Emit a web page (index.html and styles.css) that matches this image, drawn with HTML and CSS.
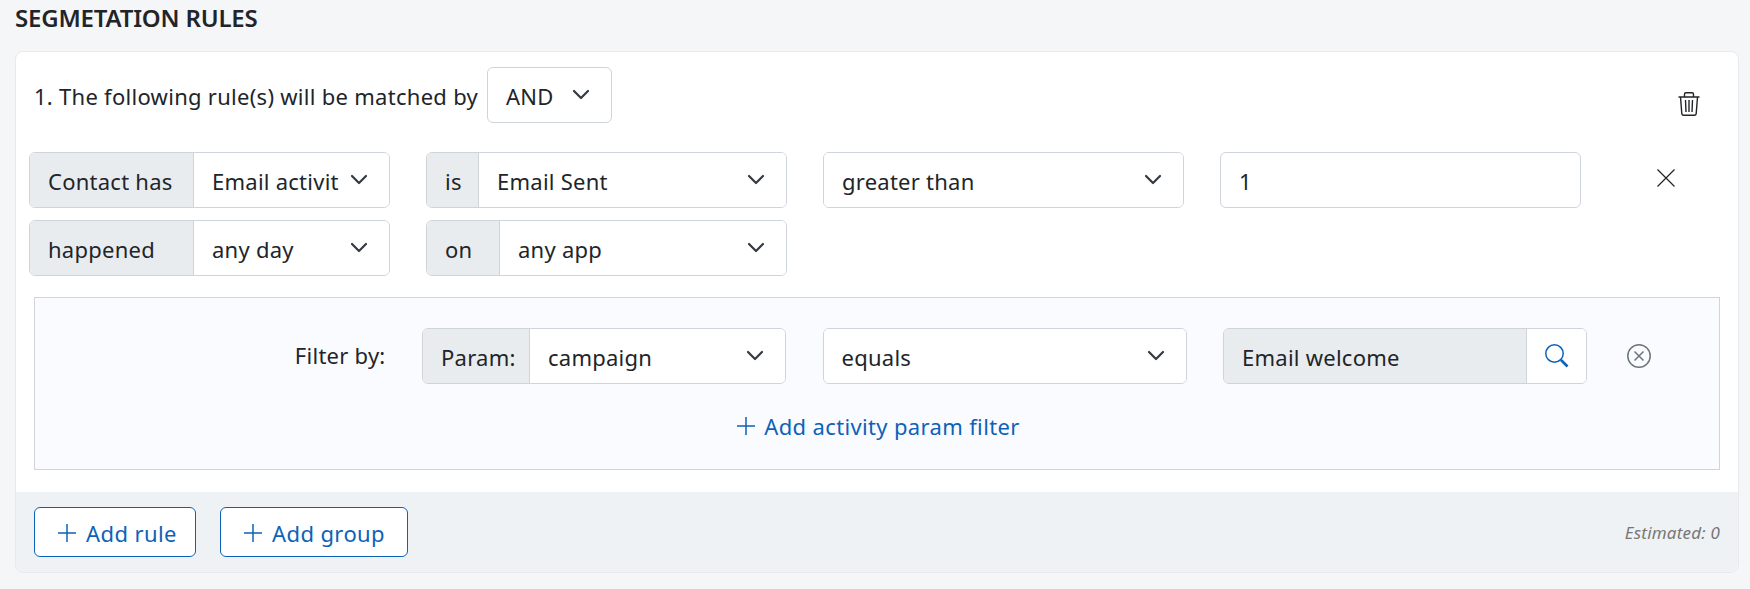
FILE: index.html
```html
<!DOCTYPE html>
<html lang="en">
<head>
    <meta charset="UTF-8">
    <meta name="viewport" content="width=device-width, initial-scale=1.0">
    <title>Segmentation rules</title>
    <link rel="stylesheet" href="styles.css">
</head>
<body>
    <h2 class="page-title">SEGMETATION RULES</h2>

    <div class="card">
        <div class="card-head">
            <div class="match-line">
                <span class="match-text">1. The following rule(s) will be matched by</span>
                <div class="select select-and">
                    <span class="select-text">AND</span>
                    <svg class="chevron" viewBox="0 0 16 16"><path d="M1 4l7 7 7-7"/></svg>
                </div>
            </div>
            <button class="icon-btn trash-btn" aria-label="Delete group">
                <svg viewBox="0 0 22 24" width="22" height="24" fill="none" stroke="#212529" stroke-width="1.4">
                    <path d="M0.5 5h21"/>
                    <path d="M6.5 5V2.2q0-1.4 1.4-1.4h6.2q1.4 0 1.4 1.4V5"/>
                    <path d="M2.5 5l1.3 16.6q.2 1.7 1.9 1.7h10.6q1.7 0 1.9-1.7L19.5 5"/>
                    <path d="M7.5 8l.5 12M11 8v12M14.5 8l-.5 12"/>
                </svg>
            </button>
        </div>

        <div class="rule-grid">
            <div class="group">
                <span class="group-label label-wide">Contact has</span>
                <div class="select">
                    <span class="select-text">Email activit</span>
                    <svg class="chevron" viewBox="0 0 16 16"><path d="M1 4l7 7 7-7"/></svg>
                </div>
            </div>
            <div class="group">
                <span class="group-label label-is">is</span>
                <div class="select">
                    <span class="select-text">Email Sent</span>
                    <svg class="chevron" viewBox="0 0 16 16"><path d="M1 4l7 7 7-7"/></svg>
                </div>
            </div>
            <div class="group">
                <div class="select">
                    <span class="select-text">greater than</span>
                    <svg class="chevron" viewBox="0 0 16 16"><path d="M1 4l7 7 7-7"/></svg>
                </div>
            </div>
            <div class="group">
                <div class="text-value">1</div>
            </div>
            <button class="icon-btn close-btn" aria-label="Remove rule">
                <svg viewBox="0 0 20 20" width="20" height="20" fill="none" stroke="#212529" stroke-width="1.2"><path d="M1.5 1.5l17 17M18.5 1.5l-17 17"/></svg>
            </button>

            <div class="group">
                <span class="group-label label-wide">happened</span>
                <div class="select">
                    <span class="select-text">any day</span>
                    <svg class="chevron" viewBox="0 0 16 16"><path d="M1 4l7 7 7-7"/></svg>
                </div>
            </div>
            <div class="group">
                <span class="group-label label-on">on</span>
                <div class="select">
                    <span class="select-text">any app</span>
                    <svg class="chevron" viewBox="0 0 16 16"><path d="M1 4l7 7 7-7"/></svg>
                </div>
            </div>
        </div>

        <div class="filter-box">
            <div class="filter-row">
                <label class="filter-label">Filter by:</label>
                <div class="group">
                    <span class="group-label label-param">Param:</span>
                    <div class="select">
                        <span class="select-text">campaign</span>
                        <svg class="chevron" viewBox="0 0 16 16"><path d="M1 4l7 7 7-7"/></svg>
                    </div>
                </div>
                <div class="group">
                    <div class="select">
                        <span class="select-text">equals</span>
                        <svg class="chevron" viewBox="0 0 16 16"><path d="M1 4l7 7 7-7"/></svg>
                    </div>
                </div>
                <div class="group">
                    <div class="readonly-value">Email welcome</div>
                    <button class="search-btn" aria-label="Search">
                        <svg viewBox="0 0 24 24" width="24" height="24" fill="none" stroke="#0d62b8" stroke-width="1.5">
                            <circle cx="9.5" cy="9.5" r="8.7"/>
                            <path d="M16 16l6.5 6.5" stroke-width="2.6"/>
                        </svg>
                    </button>
                </div>
                <button class="icon-btn remove-btn" aria-label="Remove filter">
                    <svg viewBox="0 0 24 24" width="24" height="24" fill="none" stroke="#6c757d" stroke-width="1.5">
                        <circle cx="12" cy="12" r="11.2"/>
                        <path d="M7.5 7.5l9 9M16.5 7.5l-9 9"/>
                    </svg>
                </button>
            </div>
            <div class="filter-add">
                <a class="link-add" href="#">
                    <svg class="plus" viewBox="0 0 18 18"><path d="M9 0v18M0 9h18"/></svg>
                    Add activity param filter
                </a>
            </div>
        </div>

        <div class="card-foot">
            <div class="foot-buttons">
                <button class="btn-add btn-rule">
                    <svg class="plus" viewBox="0 0 18 18"><path d="M9 0v18M0 9h18"/></svg>
                    Add rule
                </button>
                <button class="btn-add btn-group">
                    <svg class="plus" viewBox="0 0 18 18"><path d="M9 0v18M0 9h18"/></svg>
                    Add group
                </button>
            </div>
            <span class="estimated">Estimated: 0</span>
        </div>
    </div>
</body>
</html>
```

FILE: styles.css
```css
* {
    box-sizing: border-box;
}
body {
    margin: 0;
    padding: 0 11px 0 15px;
    background-color: #f5f6f8;
    color: #212529;
    font-family: "Noto Sans", "Open Sans", sans-serif;
    font-size: 22px;
    letter-spacing: 0.25px;
}
button {
    font: inherit;
    letter-spacing: inherit;
}
.page-title {
    margin: 0;
    height: 51px;
    padding-top: 2px;
    font-size: 24px;
    line-height: 32px;
    font-weight: 600;
    letter-spacing: -0.2px;
}
.card {
    background: white;
    border: 1px solid #e8e9ec;
    border-radius: 8px;
    overflow: hidden;
}
.card-head {
    display: flex;
    justify-content: space-between;
    padding: 15px 38px 0 18px;
    height: 100px;
}
.match-line {
    display: flex;
    align-items: center;
    gap: 9px;
    height: 56px;
}
.match-text {
    padding-top: 2px;
    letter-spacing: 0.28px;
}
.select-and {
    flex: none;
    width: 125px;
    height: 56px;
    border: 1px solid #ced4da;
    border-radius: 6px;
}
.icon-btn {
    border: none;
    background: none;
    padding: 0;
    display: flex;
}
.trash-btn {
    margin-top: 25px;
    height: 24px;
}
.rule-grid {
    display: grid;
    grid-template-columns: repeat(4, 361px) 1fr;
    column-gap: 36px;
    row-gap: 12px;
    padding-left: 13px;
}
.group {
    display: flex;
    height: 56px;
    border: 1px solid #ced4da;
    border-radius: 6px;
    overflow: hidden;
    background: white;
}
.group-label {
    flex: none;
    display: flex;
    align-items: center;
    padding: 2px 0 0 18px;
    background-color: #e9ecef;
    border-right: 1px solid #ced4da;
}
.label-wide {
    width: 164px;
}
.label-is {
    width: 52px;
}
.label-on {
    width: 73px;
}
.label-param {
    width: 107px;
}
.select {
    flex: 1;
    min-width: 0;
    display: flex;
    align-items: center;
    justify-content: space-between;
    padding: 0 22px 0 18px;
    background: white;
}
.select-text {
    flex: 1;
    min-width: 0;
    padding-top: 2px;
    white-space: nowrap;
}
.chevron {
    flex: none;
    width: 16px;
    height: 16px;
    margin-left: 14px;
    fill: none;
    stroke: #343a40;
    stroke-width: 2.2;
    stroke-linecap: round;
    stroke-linejoin: round;
}
.text-value {
    padding: 0 18px;
    line-height: 56px;
}
.close-btn {
    margin: 16px 0 0 39px;
    height: 20px;
}
.filter-box {
    margin: 21px 18px 0 18px;
    height: 173px;
    padding-top: 30px;
    background-color: #fafbff;
    border: 1px solid #d2d4d8;
}
.filter-row {
    display: grid;
    grid-template-columns: 350.5px 364px 364px 364px 1fr;
    column-gap: 36.5px;
    align-items: center;
}
.filter-label {
    text-align: right;
    margin-top: -2px;
}
.readonly-value {
    flex: 1;
    padding: 0 18px;
    line-height: 56px;
    background-color: #e9ecef;
    border-right: 1px solid #ced4da;
}
.search-btn {
    flex: none;
    width: 59px;
    border: none;
    background: white;
    padding: 0;
    display: flex;
    align-items: center;
    justify-content: center;
}
.remove-btn {
    margin-left: 3px;
}
.filter-add {
    text-align: center;
    margin-top: 27px;
    padding-left: 3px;
}
.link-add {
    display: inline-flex;
    align-items: center;
    gap: 9px;
    color: #0d62b8;
    text-decoration: none;
    letter-spacing: 0.35px;
}
.plus {
    flex: none;
    width: 18px;
    height: 18px;
    fill: none;
    stroke: #0d62b8;
    stroke-width: 1.5;
}
.card-foot {
    margin-top: 22px;
    height: 80px;
    padding: 15px 18px 0 18px;
    background-color: #eff2f5;
    display: flex;
    justify-content: space-between;
}
.foot-buttons {
    display: flex;
    gap: 24px;
}
.btn-add {
    display: flex;
    align-items: center;
    gap: 10px;
    height: 50px;
    padding: 2px 0 0 23px;
    color: #0d62b8;
    background: white;
    border: 1px solid #0d62b8;
    border-radius: 6px;
    letter-spacing: 0.4px;
}
.btn-rule {
    width: 162px;
}
.btn-group {
    width: 188px;
}
.estimated {
    margin-top: 14px;
    font-size: 17px;
    font-style: italic;
    color: #777;
    letter-spacing: 0.2px;
}
```
